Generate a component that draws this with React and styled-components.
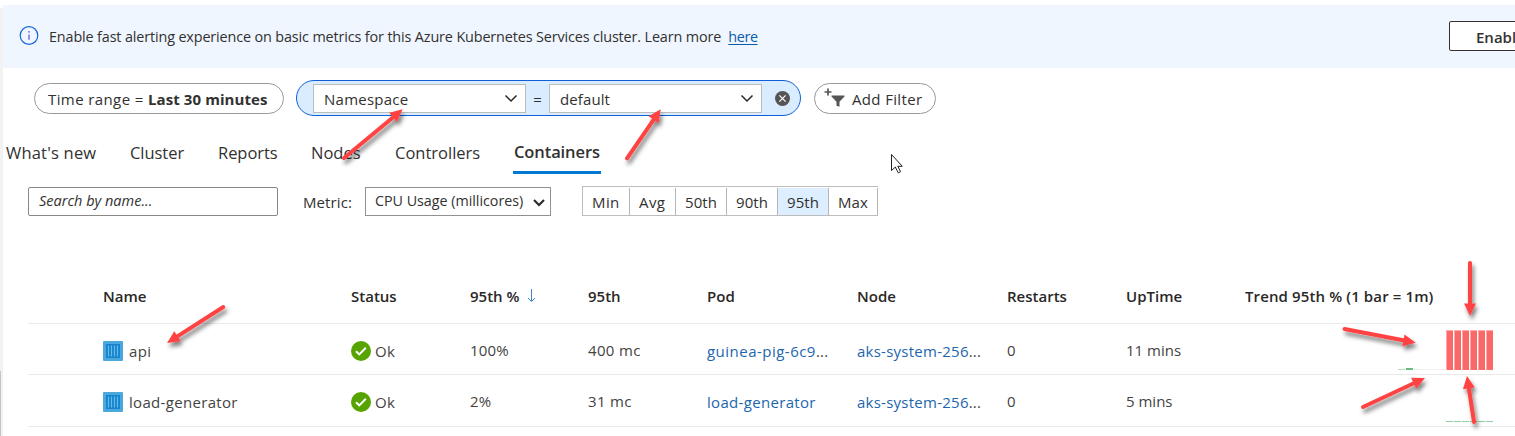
import React from 'react';
import styled, { createGlobalStyle } from 'styled-components';

const Global = createGlobalStyle`
  * { box-sizing: border-box; }
  html, body { margin: 0; background: #fff; overflow: hidden; }
  body { font-family: "Open Sans", "Noto Sans", sans-serif; font-size: 15px; color: #323130; }
  button, input { font: inherit; color: inherit; }
`;

const Page = styled.div`
  position: relative;
  display: flex;
  width: 1515px;
  height: 436px;
  overflow: hidden;
`;
const Gutter = styled.div`
  flex: 0 0 3px;
  margin-top: 8px;
  background: linear-gradient(#c4c4c4, #c4c4c4) 0 363px / 1px 65px no-repeat, #f2f2f2;
`;
const Main = styled.main`
  flex: 1;
  min-width: 0;
  padding-top: 5px;
`;
const Label = styled.span`
  white-space: pre;
  line-height: 20px;
  letter-spacing: ${p => p.$ls || 0}px;
  font-size: ${p => p.$size || 15}px;
  font-weight: ${p => p.$weight || 400};
`;
const Banner = styled.div`
  display: flex;
  height: 63px;
  padding: 0 0 0 16px;
  background: #eff6ff;
`;
const InfoIcon = styled.svg`
  width: 20px;
  height: 20px;
  margin: 21px 10px 0 0;
`;
const BannerText = styled.div`
  flex: 1;
  padding-top: 21px;
  line-height: 20px;
  white-space: pre;
`;
const Link = styled.a`
  color: #0b5cad;
  text-decoration: underline;
  text-underline-offset: 2px;
`;
const EnableButton = styled.button`
  flex: 0 0 100px;
  height: 30px;
  margin: 16px -34px 0 0;
  padding: 1px 0 0 26px;
  text-align: left;
  font-weight: 600;
  background: #fff;
  border: 1px solid #323130;
  border-radius: 2px;
`;
const Filters = styled.div`
  display: flex;
  align-items: center;
  height: 60px;
  padding-left: 31px;
`;
const Pill = styled.div`
  display: flex;
  align-items: center;
  width: ${p => p.$w}px;
  height: 31px;
  padding: 1px 0 0 ${p => p.$pad}px;
  border: 1px solid #999;
  border-radius: 16px;
`;
const FilterPill = styled.div`
  display: flex;
  align-items: center;
  width: 505px;
  height: 36px;
  margin: 0 13px 0 12px;
  padding-left: 16px;
  background: #daecff;
  border: 1px solid #0f5fd6;
  border-radius: 18px;
`;
const Dropdown = styled.div`
  display: flex;
  align-items: center;
  justify-content: space-between;
  width: 213px;
  height: 29px;
  padding: 1px 7px 0 10px;
  background: #fff;
  border: 1px solid #bdbdbd;
`;
const Equals = styled.span`
  width: 23px;
  padding-top: 1px;
  text-align: center;
`;
const ClearIcon = styled.svg`
  width: 15px;
  height: 15px;
  margin-left: 13px;
`;
const FilterIcon = styled.svg`
  width: 22px;
  height: 20px;
  margin: -2px 6px 0 0;
`;
const Tabs = styled.nav`
  display: flex;
  gap: 33px;
  height: 46px;
  padding-left: 3px;
`;
const Tab = styled.div`
  width: ${p => p.$w}px;
  height: 46px;
  padding: ${p => (p.$active ? '14px 0 0 1px' : '15px 0 0 0')};
  border-bottom: 3px solid ${p => (p.$active ? '#0078d4' : 'transparent')};
  white-space: nowrap;
`;
const Controls = styled.div`
  display: flex;
  align-items: flex-start;
  height: 96px;
  padding: 13px 0 0 25px;
`;
const Search = styled.div`
  width: 250px;
  height: 29px;
  padding: 2px 0 0 10px;
  font-style: italic;
  border: 1px solid #8a8886;
  border-radius: 2px;
`;
const MetricLabel = styled.div`
  width: 62px;
  margin: 5px 0 0 25px;
`;
const MetricSelect = styled.div`
  display: flex;
  justify-content: space-between;
  width: 186px;
  height: 29px;
  padding: 3px 4px 0 9px;
  border: 1px solid #919191;
`;
const Segments = styled.div`
  display: flex;
  height: 30px;
  margin: -1px 0 0 31px;
  border: 1px solid #bdbdbd;
  border-right: 0;
`;
const Segment = styled.div`
  width: ${p => p.$w}px;
  margin-top: 1px;
  padding: 4px 0 0 9px;
  border-right: 1px solid #b5b5b5;
  background: ${p => (p.$active ? '#dceeff' : '#fff')};
`;
const Table = styled.div`
  margin-left: 25px;
`;
const Row = styled.div`
  display: grid;
  grid-template-columns: 248px 119px 118px 119px 150px 150px 119px 119px 1fr;
  height: ${p => p.$h}px;
  padding-left: 75px;
  border-bottom: 1px solid #e9e9e9;
`;
const HeadCell = styled.div`
  display: flex;
  padding-top: 16px;
  color: #292827;
`;
const Cell = styled.div`
  display: flex;
  padding-top: ${p => p.$top || 17}px;
  color: #444342;
`;
const CellLink = styled.span`
  color: #1d66ad;
`;
const Mark = styled.svg`
  width: 20px;
  height: 20px;
  margin-right: ${p => p.$gap}px;
`;
const SortIcon = styled.svg`
  width: 9px;
  height: 14px;
  margin: 3px 0 0 8px;
`;
const Trend = styled.svg`
  width: 248px;
  height: 51px;
`;
const Annotations = styled.svg`
  position: absolute;
  left: 0;
  top: 0;
  width: 1515px;
  height: 436px;
  pointer-events: none;
`;

const Chevron = ({ bold }) => (
  <svg width="14" height={bold ? 22 : 14} viewBox={bold ? '0 -4 14 22' : '0 0 14 14'} fill="none">
    <path d={bold ? 'M2 5l5 5 5-5' : 'M1.5 3.5l5.5 5.5 5.5-5.5'} stroke="#292827" strokeWidth={bold ? 2.1 : 1.5} />
  </svg>
);

const ContainerIcon = () => (
  <Mark $gap={6} viewBox="0 0 20 20">
    <rect width="20" height="20" rx="1" fill="#4aa8dc" />
    <rect x="3" y="3" width="14" height="14" fill="#1684cd" />
    <path d="M5.5 4.5v11M8.5 4.5v11M11.5 4.5v11M14.5 4.5v11" stroke="#62bbe8" strokeWidth="1.2" />
  </Mark>
);

const OkIcon = () => (
  <Mark $gap={4} viewBox="0 0 20 20">
    <circle cx="10" cy="10" r="10" fill="#57a300" />
    <path d="M5 10.2l3.3 3.2 6.5-6.6" fill="none" stroke="#fff" strokeWidth="2" />
  </Mark>
);

const tabs = [
  { name: "What's new", w: 91, ls: 0.2 },
  { name: 'Cluster', w: 55, ls: -0.05 },
  { name: 'Reports', w: 60, ls: -0.05 },
  { name: 'Nodes', w: 51, ls: 0 },
  { name: 'Controllers', w: 85, ls: 0 },
  { name: 'Containers', w: 88, ls: -0.1, active: true },
];
const segments = [
  { name: 'Min', w: 47, ls: 0.4 },
  { name: 'Avg', w: 46, ls: 0.4 },
  { name: '50th', w: 51, ls: 0.1 },
  { name: '90th', w: 51, ls: 0.1 },
  { name: '95th', w: 51, ls: 0.1 },
  { name: 'Max', w: 49, ls: 0.1 },
];
const headings = ['Name', 'Status', '95th %', '95th', 'Pod', 'Node', 'Restarts', 'UpTime', 'Trend 95th % (1 bar = 1m)'];
const rows = [
  { name: 'api', pct: '100%', value: '400 mc', pod: 'guinea-pig-6c9', cut: true, up: '11 mins', h: 51 },
  { name: 'load-generator', pct: '2%', value: '31 mc', pod: 'load-generator', cut: false, up: '5 mins', h: 52 },
];
const six = [0, 1, 2, 3, 4, 5];
const arrows = [
  [344, 158, 402.7, 109.3],
  [627, 158.3, 660.7, 109.3],
  [223.3, 307, 167, 343],
  [1470, 263, 1470, 316],
  [1344.5, 329, 1415.7, 342.7],
  [1363, 407, 1425, 378],
  [1474, 422, 1467, 376],
];

const Arrow = ({ points: [x1, y1, x2, y2] }) => {
  const length = Math.hypot(x2 - x1, y2 - y1);
  const angle = (Math.atan2(y2 - y1, x2 - x1) * 180) / Math.PI;
  return (
    <g filter="url(#shadow)">
      <g transform={`translate(${x1} ${y1}) rotate(${angle})`} fill="#ff4343">
        <path d={`M0 0H${length - 10}`} stroke="#ff4343" strokeWidth="4" strokeLinecap="round" />
        <path d={`M${length} 0l-12.5-6v12z`} />
      </g>
    </g>
  );
};

export default function App() {
  return (
    <Page>
      <Global />
      <Gutter />
      <Main>
        <Banner>
          <InfoIcon viewBox="0 0 20 20" fill="none">
            <circle cx="10" cy="9.5" r="8.8" stroke="#1664dc" strokeWidth="1.2" />
            <path d="M10 8.5v5.3" stroke="#5a50e0" strokeWidth="1.2" />
            <circle cx="10" cy="5.9" r=".8" fill="#5a50e0" />
          </InfoIcon>
          <BannerText>
            <Label $size={14.4} $ls={-0.14}>Enable fast alerting experience on basic metrics for this Azure Kubernetes Services cluster. Learn more  </Label>
            <Link href="#"><Label $size={14.4} $ls={-0.4}>here</Label></Link>
          </BannerText>
          <EnableButton>Enable</EnableButton>
        </Banner>
        <Filters>
          <Pill $w={250} $pad={13}>
            <Label $ls={0.4}>Time range = </Label><Label $weight={700} $ls={0.08}>Last 30 minutes</Label>
          </Pill>
          <FilterPill>
            <Dropdown><Label $ls={0.25}>Namespace</Label><Chevron /></Dropdown>
            <Equals>=</Equals>
            <Dropdown><Label $ls={0.1}>default</Label><Chevron /></Dropdown>
            <ClearIcon viewBox="0 0 15 15">
              <circle cx="7.5" cy="7.5" r="7.5" fill="#555" />
              <path d="M4.4 4.4l6.2 6.2M10.6 4.4l-6.2 6.2" stroke="#fff" strokeWidth="1.2" />
            </ClearIcon>
          </FilterPill>
          <Pill $w={122} $pad={9}>
            <FilterIcon viewBox="0 0 22 20">
              <path d="M4 .5v7M.5 4h7" stroke="#555" strokeWidth="1.7" />
              <path d="M7.5 7.5h13v1l-5 5.2v5l-3-1v-4l-5-5.2z" fill="#555" />
            </FilterIcon>
            <Label $ls={0.35}>Add Filter</Label>
          </Pill>
        </Filters>
        <Tabs>
          {tabs.map(t => (
            <Tab key={t.name} $w={t.w} $active={t.active}>
              <Label $size={16.5} $weight={t.active ? 600 : 400} $ls={t.ls}>{t.name}</Label>
            </Tab>
          ))}
        </Tabs>
        <Controls>
          <Search><Label $size={14.5}>Search by name...</Label></Search>
          <MetricLabel><Label $ls={0.1}>Metric:</Label></MetricLabel>
          <MetricSelect><Label $size={14.3} $ls={-0.02}>CPU Usage (millicores)</Label><Chevron bold /></MetricSelect>
          <Segments>
            {segments.map(s => (
              <Segment key={s.name} $w={s.w} $active={s.name === '95th'}><Label $ls={s.ls}>{s.name}</Label></Segment>
            ))}
          </Segments>
        </Controls>
        <Table>
          <Row $h={54}>
            {headings.map(h => (
              <HeadCell key={h}>
                <Label $weight={600} $ls={h.startsWith('Trend') ? 0.12 : 0}>{h}</Label>
                {h === '95th %' && (
                  <SortIcon viewBox="0 0 9 14" fill="none" stroke="#3d85c6"><path d="M4.5 0v12M1 9l3.5 3.5L8 9" /></SortIcon>
                )}
              </HeadCell>
            ))}
          </Row>
          {rows.map((r, i) => (
            <Row key={r.name} $h={r.h}>
              <Cell><ContainerIcon /><Label $ls={0.32}>{r.name}</Label></Cell>
              <Cell><OkIcon /><Label $ls={0.3}>Ok</Label></Cell>
              <Cell $top={16}><Label $ls={0.2}>{r.pct}</Label></Cell>
              <Cell $top={16}><Label $ls={0.35}>{r.value}</Label></Cell>
              <Cell><CellLink><Label $ls={r.cut ? 0.48 : 0.32}>{r.pod}</Label></CellLink>{r.cut && <Label $ls={0.2}>...</Label>}</Cell>
              <Cell><CellLink><Label $ls={0.25}>aks-system-256</Label></CellLink><Label $ls={0.2}>...</Label></Cell>
              <Cell $top={16}><Label>0</Label></Cell>
              <Cell $top={16}><Label>{r.up}</Label></Cell>
              <Trend viewBox="0 0 248 51">
                {i === 0 ? (
                  <>
                    {six.map(n => (
                      <g key={n}>
                        <rect x={201 + n * 8} y="6" width="7" height="40" fill="#ffa9a9" />
                        <rect x={202 + n * 8} y="7" width="6" height="39" fill="#fb6868" />
                      </g>
                    ))}
                    <rect x="153" y="45" width="7" height="1" fill="#b5dfc0" />
                    <rect x="161" y="44" width="7" height="2" fill="#68bd7c" />
                    <rect x="169" y="45" width="7" height="1" fill="#dcefe1" />
                    <path d="M177 45.5h7m1 0h7m1 0h7" stroke="#efefef" />
                  </>
                ) : (
                  six.map(n => <rect key={n} x={201 + n * 8} y="46" width="7" height="1" fill="#8fcea0" />)
                )}
              </Trend>
            </Row>
          ))}
        </Table>
      </Main>
      <Annotations viewBox="0 0 1515 436">
        <defs>
          <filter id="shadow" filterUnits="userSpaceOnUse" x="0" y="0" width="1515" height="436">
            <feDropShadow dx="2" dy="4" stdDeviation="2" floodColor="#000" floodOpacity=".5" />
          </filter>
        </defs>
        {arrows.map(a => <Arrow key={a.join()} points={a} />)}
        <path d="M891.5 154.5v16l3.8-3.4 3 5.8 2.3-1.2-2.8-5.4h4.5z" fill="#fff" stroke="#20202c" />
      </Annotations>
    </Page>
  );
}
